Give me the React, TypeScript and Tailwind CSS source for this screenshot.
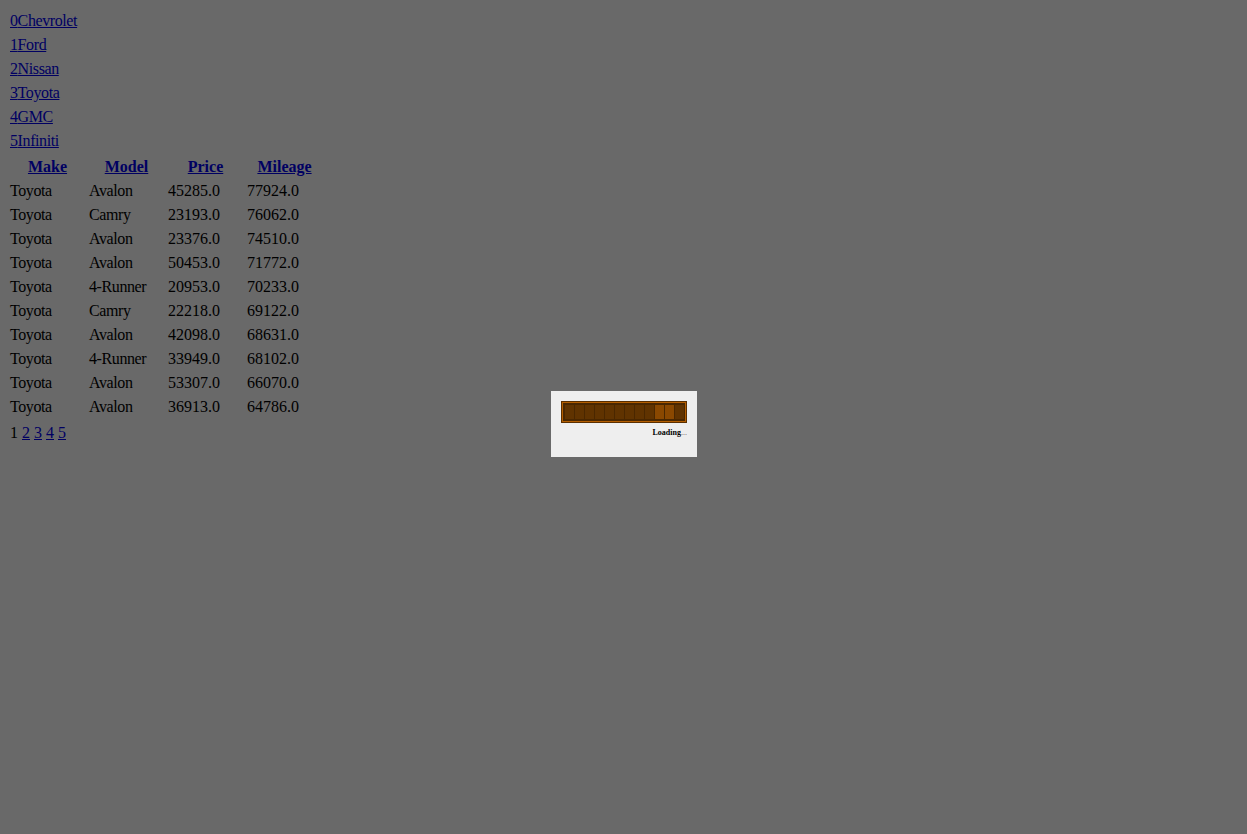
const makes = ["Chevrolet", "Ford", "Nissan", "Toyota", "GMC", "Infiniti"];

const cars = [
  { make: "Toyota", model: "Avalon", price: "45285.0", mileage: "77924.0" },
  { make: "Toyota", model: "Camry", price: "23193.0", mileage: "76062.0" },
  { make: "Toyota", model: "Avalon", price: "23376.0", mileage: "74510.0" },
  { make: "Toyota", model: "Avalon", price: "50453.0", mileage: "71772.0" },
  { make: "Toyota", model: "4-Runner", price: "20953.0", mileage: "70233.0" },
  { make: "Toyota", model: "Camry", price: "22218.0", mileage: "69122.0" },
  { make: "Toyota", model: "Avalon", price: "42098.0", mileage: "68631.0" },
  { make: "Toyota", model: "4-Runner", price: "33949.0", mileage: "68102.0" },
  { make: "Toyota", model: "Avalon", price: "53307.0", mileage: "66070.0" },
  { make: "Toyota", model: "Avalon", price: "36913.0", mileage: "64786.0" },
];

const headers = ["Make", "Model", "Price", "Mileage"];

const ProgressBar = () => (
  <svg width="126" height="22" viewBox="0 0 126 22">
    <rect x="0" y="0" width="126" height="22" fill="#5a2f00" />
    <rect x="1.5" y="1.5" width="123" height="19" fill="none" stroke="#b45e00" />
    <rect x="2" y="2" width="122" height="18" fill="#4a2700" />
    {Array.from({ length: 12 }).map((_, i) => (
      <rect
        key={i}
        x={4 + i * 10}
        y={4}
        width={9}
        height={14}
        fill={i === 9 || i === 10 ? "#8a4800" : "#603300"}
      />
    ))}
  </svg>
);

const App = () => {
  return (
    <div
      className="relative min-h-[834px] w-full bg-[#696969] text-[16px] text-black"
      style={{ fontFamily: '"Liberation Serif", "Times New Roman", serif' }}
    >
      <div className="pt-[9px] pl-[10px] tracking-[-0.4px]">
        {makes.map((m, i) => (
          <div key={i} className="h-[24px] leading-[24px]">
            <a href="#" className="text-[#000062] underline">
              {i}
              {m}
            </a>
          </div>
        ))}
      </div>

      {/* Cars table */}
      <div className="mt-[2px] ml-[8px] grid grid-cols-[79px_79px_79px_79px]">
        {headers.map((h) => (
          <div key={h} className="h-[24px] px-[2px] text-center font-bold leading-[24px]">
            <a href="#" className="text-[#000062] underline">
              {h}
            </a>
          </div>
        ))}
        {cars.map((c, i) => (
          <div key={i} className="contents">
            <div className="h-[24px] px-[2px] leading-[24px] tracking-[-0.4px]">{c.make}</div>
            <div className="h-[24px] px-[2px] leading-[24px] tracking-[-0.4px]">{c.model}</div>
            <div className="h-[24px] px-[2px] leading-[24px]">{c.price}</div>
            <div className="h-[24px] px-[2px] leading-[24px]">{c.mileage}</div>
          </div>
        ))}
      </div>

      <div className="mt-[2px] ml-[10px] h-[24px] leading-[24px]">
        1{" "}
        {[2, 3, 4, 5].map((n) => (
          <span key={n}>
            <a href="#" className="text-[#000062] underline">
              {n}
            </a>{" "}
          </span>
        ))}
      </div>

      {/* Loading dialog */}
      <div className="absolute left-[551px] top-[391px] flex h-[66px] w-[146px] flex-col bg-[#eeeeee] pt-[10px] pl-[10px]">
        <ProgressBar />
        <div className="mt-[5px] w-[126px] text-right text-[8px] font-bold leading-[10px]">
          Loading<span className="font-normal text-[#555555]">...</span>
        </div>
      </div>
    </div>
  );
};

export default App;
